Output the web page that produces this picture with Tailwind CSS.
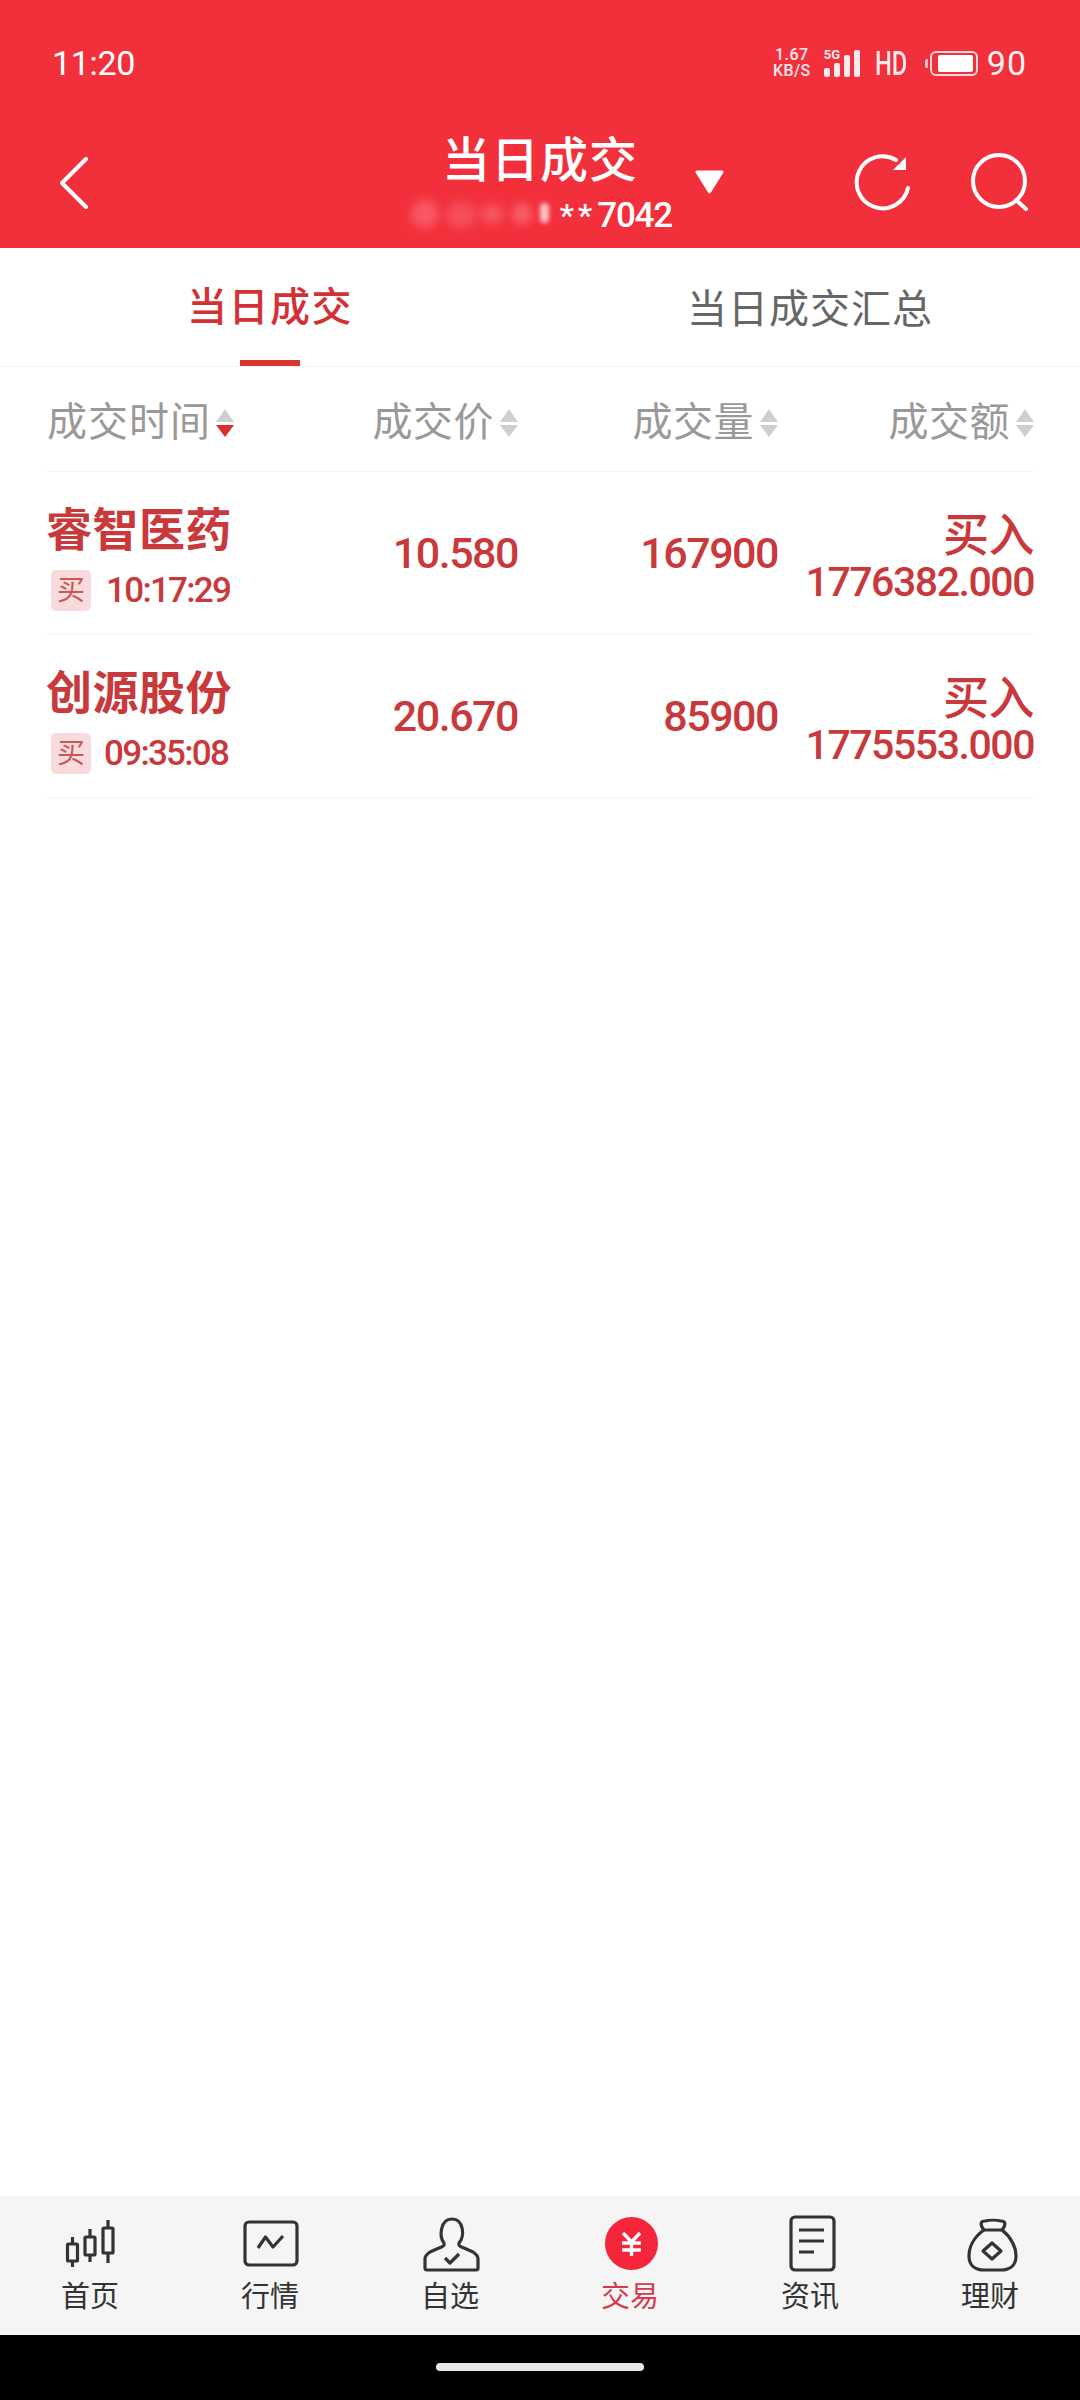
<!DOCTYPE html>
<html lang="zh-CN">
<head>
  <meta charset="UTF-8" />
  <meta name="viewport" content="width=device-width, initial-scale=1.0" />
  <title>当日成交</title>
  <script src="https://cdn.jsdelivr.net/npm/@tailwindcss/browser@4"></script>
</head>
<body class="bg-white">
  <div class="w-[1080px] h-[2400px] flex flex-col font-['Roboto','Noto_Sans_CJK_SC',sans-serif]">

    <!-- 顶部红色区域 -->
    <header class="h-[248px] shrink-0 bg-[#f2303c] text-white">
      <div class="h-[126px] flex items-center justify-between pl-[52px] pr-[53px]">
        <span class="text-[34px] leading-none tracking-[-0.3px]">11:20</span>
        <div class="flex items-center">
          <div class="w-[42px] flex flex-col items-center font-medium text-[16px] leading-[16px] text-white/90">
            <span class="tracking-[0.5px]">1.67</span>
            <span class="tracking-[0.4px]">KB/S</span>
          </div>
          <div class="relative ml-[11px] h-[27px] flex items-end gap-[4px]">
            <span class="absolute left-0 top-[-2px] text-[13px] leading-[13px] font-bold text-white/90">5G</span>
            <i class="block w-[6px] h-[9px] bg-white/90 rounded-[2px]"></i>
            <i class="block w-[6px] h-[14px] bg-white/90 rounded-[2px]"></i>
            <i class="block w-[6px] h-[22px] bg-white/90 rounded-[2px]"></i>
            <i class="block w-[6px] h-[27px] bg-white/90 rounded-[2px]"></i>
          </div>
          <span class="ml-[15px] w-[31px] text-[33px] leading-none font-medium text-white/90 whitespace-nowrap origin-left scale-x-[0.72]">HD</span>
          <div class="ml-[19px] flex items-center">
            <i class="block w-[3px] h-[9px] mr-[2px] bg-white/70 rounded-l-[2px]"></i>
            <div class="w-[48px] h-[25px] rounded-[6px] border-[2px] border-white/80 pl-[6px] pr-[3px] py-[2px]">
              <div class="w-full h-full bg-white rounded-[2px]"></div>
            </div>
          </div>
          <span class="ml-[9px] text-[34px] leading-none text-white/95 tracking-[1px]">90</span>
        </div>
      </div>

      <div class="relative h-[122px] flex justify-between items-start">
        <button class="ml-[60px] mt-[31px]">
          <svg class="block w-[28px] h-[52px]" viewBox="0 0 28 52" fill="none" stroke="#fff" stroke-width="4" stroke-linecap="round" stroke-linejoin="round">
            <path d="M26 2 L2 26 L26 50"/>
          </svg>
        </button>

        <div class="absolute left-0 right-0 top-[6px] flex flex-col items-center">
          <h1 class="text-[48px] leading-[58px] font-medium tracking-[1px]">当日成交</h1>
          <div class="relative w-[264px] h-[36px] mt-[7px] flex items-center justify-end leading-none">
            <span class="absolute left-[3px] top-[3px] w-[28px] h-[28px] rounded-full bg-[#ff7f8c]/50 blur-[5px]"></span>
            <span class="absolute left-[38px] top-[5px] w-[30px] h-[26px] rounded-full bg-[#f9626f]/60 blur-[5px]"></span>
            <span class="absolute left-[72px] top-[8px] w-[24px] h-[18px] rounded-full bg-[#ff929c]/40 blur-[5px]"></span>
            <span class="absolute left-[104px] top-[6px] w-[20px] h-[22px] rounded-full bg-[#ff8793]/50 blur-[4px]"></span>
            <span class="absolute left-[132px] top-[6px] w-[9px] h-[20px] rounded-full bg-white/70 blur-[2px]"></span>
            <span class="text-[32px] tracking-[4px] mr-[1px] font-medium">**</span>
            <span class="text-[35px] tracking-[-1.2px] font-medium">7042</span>
          </div>
        </div>

        <svg class="absolute left-[694px] top-[44px] w-[31px] h-[24px]" viewBox="0 0 31 24" fill="#fff" stroke="#fff" stroke-width="3" stroke-linejoin="round">
          <path d="M3 2 L28 2 L15.5 22 Z"/>
        </svg>

        <div class="flex mt-[26px] mr-[50px] gap-[58px]">
          <svg class="block w-[58px] h-[60px]" viewBox="0 0 58 60" fill="none" stroke="#fff" stroke-width="4" stroke-linecap="round">
            <path d="M42 8 A26 26 0 1 0 54 36"/>
            <path d="M52 5 L52 18 L39 18 Z" fill="#fff" stroke="none"/>
          </svg>
          <svg class="block w-[60px] h-[60px]" viewBox="0 0 60 60" fill="none" stroke="#fff" stroke-width="4" stroke-linecap="round">
            <circle cx="29" cy="29" r="26"/>
            <path d="M46 48 L56 57"/>
          </svg>
        </div>
      </div>
    </header>

    <!-- 标签页 -->
    <nav class="h-[119px] shrink-0 grid grid-cols-2 border-b border-[#f3f3f3] text-[40px] leading-none">
      <div class="relative flex justify-center pt-[40px] font-medium text-[#d23236]">
        <span class="tracking-[1.5px]">当日成交</span>
        <i class="absolute left-[240px] bottom-0 w-[60px] h-[6px] bg-[#d9322f]"></i>
      </div>
      <div class="flex justify-center pt-[42px] text-[#666]">
        <span class="tracking-[1px]">当日成交汇总</span>
      </div>
    </nav>

    <main class="flex-1 px-[46px]">
      <!-- 表头 -->
      <div class="h-[105px] grid grid-cols-[220px_252px_260px_256px] items-center border-b border-[#f3f3f3] text-[40px] leading-none text-[#999] pt-[7px]">
        <div class="flex items-center">
          <span class="ml-[1px] tracking-[1px]">成交时间</span>
          <span class="ml-[5px] flex flex-col gap-[3px]">
            <i class="block w-0 h-0 border-x-[9px] border-x-transparent border-b-[13px] border-b-[#cfcfcf]"></i>
            <i class="block w-0 h-0 border-x-[9px] border-x-transparent border-t-[12px] border-t-[#de2b2b]"></i>
          </span>
        </div>
        <div class="flex items-center justify-end">
          <span class="tracking-[0.5px]">成交价</span>
          <span class="ml-[6px] flex flex-col gap-[3px]">
            <i class="block w-0 h-0 border-x-[9px] border-x-transparent border-b-[13px] border-b-[#cfcfcf]"></i>
            <i class="block w-0 h-0 border-x-[9px] border-x-transparent border-t-[12px] border-t-[#cfcfcf]"></i>
          </span>
        </div>
        <div class="flex items-center justify-end">
          <span class="tracking-[0.5px]">成交量</span>
          <span class="ml-[6px] flex flex-col gap-[3px]">
            <i class="block w-0 h-0 border-x-[9px] border-x-transparent border-b-[13px] border-b-[#cfcfcf]"></i>
            <i class="block w-0 h-0 border-x-[9px] border-x-transparent border-t-[12px] border-t-[#cfcfcf]"></i>
          </span>
        </div>
        <div class="flex items-center justify-end">
          <span class="tracking-[0.5px]">成交额</span>
          <span class="ml-[6px] flex flex-col gap-[3px]">
            <i class="block w-0 h-0 border-x-[9px] border-x-transparent border-b-[13px] border-b-[#cfcfcf]"></i>
            <i class="block w-0 h-0 border-x-[9px] border-x-transparent border-t-[12px] border-t-[#cfcfcf]"></i>
          </span>
        </div>
      </div>

      <!-- 成交记录 -->
      <div class="h-[163px] grid grid-cols-[220px_252px_260px_256px] items-center border-b border-[#f3f3f3] text-[#c9393b]">
        <div class="pt-[9px]">
          <div class="text-[46px] leading-[50px] font-bold tracking-[0.5px] whitespace-nowrap">睿智医药</div>
          <div class="flex items-center mt-[15px]">
            <span class="ml-[5px] w-[40px] h-[41px] rounded-[5px] bg-[#f8dcdd] text-[#cf5656] text-[28px] leading-[41px] text-center">买</span>
            <span class="ml-[15px] text-[35px] leading-none font-medium tracking-[-1.7px]">10:17:29</span>
          </div>
        </div>
        <div class="text-right text-[43px] leading-none font-medium tracking-[-1.5px]">10.580</div>
        <div class="text-right text-[43px] leading-none font-medium tracking-[-1.5px]">167900</div>
        <div class="text-right font-medium pt-[6px]">
          <div class="text-[46px] leading-[50px] tracking-[-0.5px]">买入</div>
          <div class="text-[41px] leading-[40px] mt-[2px] tracking-[-1.45px] whitespace-nowrap">1776382.000</div>
        </div>
      </div>

      <div class="h-[163px] grid grid-cols-[220px_252px_260px_256px] items-center border-b border-[#f3f3f3] text-[#c9393b]">
        <div class="pt-[9px]">
          <div class="text-[46px] leading-[50px] font-bold tracking-[0.5px] whitespace-nowrap">创源股份</div>
          <div class="flex items-center mt-[15px]">
            <span class="ml-[5px] w-[40px] h-[41px] rounded-[5px] bg-[#f8dcdd] text-[#cf5656] text-[28px] leading-[41px] text-center">买</span>
            <span class="ml-[13px] text-[35px] leading-none font-medium tracking-[-1.7px]">09:35:08</span>
          </div>
        </div>
        <div class="text-right text-[43px] leading-none font-medium tracking-[-1.5px]">20.670</div>
        <div class="text-right text-[43px] leading-none font-medium tracking-[-1.5px]">85900</div>
        <div class="text-right font-medium pt-[6px]">
          <div class="text-[46px] leading-[50px] tracking-[-0.5px]">买入</div>
          <div class="text-[41px] leading-[40px] mt-[2px] tracking-[-1.45px] whitespace-nowrap">1775553.000</div>
        </div>
      </div>
    </main>

    <!-- 底部导航 -->
    <footer class="h-[139px] shrink-0 bg-[#f5f5f5] grid grid-cols-6 pt-[19px] text-[29px] leading-[34px] text-[#333]">
      <a class="flex flex-col items-center">
        <svg class="block w-[60px] h-[58px]" viewBox="0 -2 60 58" fill="none" stroke="#333" stroke-width="3.2">
          <rect x="7.5" y="27" width="10" height="17" rx="1"/>
          <path d="M12.5 20 V27 M12.5 44 V50"/>
          <rect x="25" y="20" width="10" height="18" rx="1"/>
          <path d="M30 12 V20 M30 38 V45"/>
          <rect x="43" y="11" width="10" height="25" rx="1"/>
          <path d="M48 3 V11 M48 36 V46"/>
        </svg>
        <span class="mt-[7px]">首页</span>
      </a>
      <a class="flex flex-col items-center">
        <svg class="block w-[60px] h-[58px]" viewBox="0 -2 60 58" fill="none" stroke="#333" stroke-width="3.2" stroke-linejoin="round">
          <rect x="5" y="5" width="52" height="43" rx="4"/>
          <path d="M18 31 L25.5 20 L33 30 L43 19"/>
        </svg>
        <span class="mt-[7px]">行情</span>
      </a>
      <a class="flex flex-col items-center">
        <svg class="block w-[60px] h-[58px]" viewBox="0 -2 60 58" fill="none" stroke="#333" stroke-width="3.2" stroke-linejoin="round">
          <path d="M24 26 C19 20 20 2 32 2 C44 2 45 20 39 26 L39 28 C39 29 41 30 44 31 L53 35 C56 37 58 39 58 42 L58 51 Q58 53 56 53 L7 53 Q5 53 5 51 L5 42 C5 39 7 37 10 35 L19 31 C22 30 24 29 24 28 Z"/>
          <path d="M25 41 L30 46 L39 37"/>
        </svg>
        <span class="mt-[7px]">自选</span>
      </a>
      <a class="flex flex-col items-center text-[#d43c4e]">
        <svg class="block w-[60px] h-[58px]" viewBox="0 -2 60 58" fill="none" stroke="#fff" stroke-width="3.4">
          <circle cx="31.5" cy="26.5" r="26.5" fill="#f5263c" stroke="none"/>
          <path d="M23 16 L31.5 25 L40 16 M31.5 25 V39 M22 26 H41 M22 33 H41"/>
        </svg>
        <span class="mt-[7px]">交易</span>
      </a>
      <a class="flex flex-col items-center">
        <svg class="block w-[60px] h-[58px]" viewBox="0 -2 60 58" fill="none" stroke="#333" stroke-width="3.2">
          <rect x="11" y="0" width="43" height="53" rx="4"/>
          <path d="M19 13 H44 M19 24 H44 M19 35 H34"/>
        </svg>
        <span class="mt-[7px]">资讯</span>
      </a>
      <a class="flex flex-col items-center">
        <svg class="block w-[60px] h-[58px]" viewBox="0 -2 60 58" fill="none" stroke="#333" stroke-width="3.2" stroke-linejoin="round">
          <path d="M24 13 C20 8 20 4 25 4 C29 3 37 3 41 4 C46 4 46 8 42 13 Z"/>
          <path d="M24 13 C14 20 9 30 9 39 C9 49 16 53 24 53 L41 53 C49 53 56 49 56 39 C56 30 51 20 42 13"/>
          <path d="M32 26 L41 34 L32 42 L23 34 Z"/>
        </svg>
        <span class="mt-[7px]">理财</span>
      </a>
    </footer>

    <!-- 系统手势条 -->
    <div class="h-[65px] shrink-0 bg-black flex justify-center pt-[28px]">
      <i class="block w-[208px] h-[8px] rounded-full bg-[#e8e8e8]"></i>
    </div>
  </div>
</body>
</html>
